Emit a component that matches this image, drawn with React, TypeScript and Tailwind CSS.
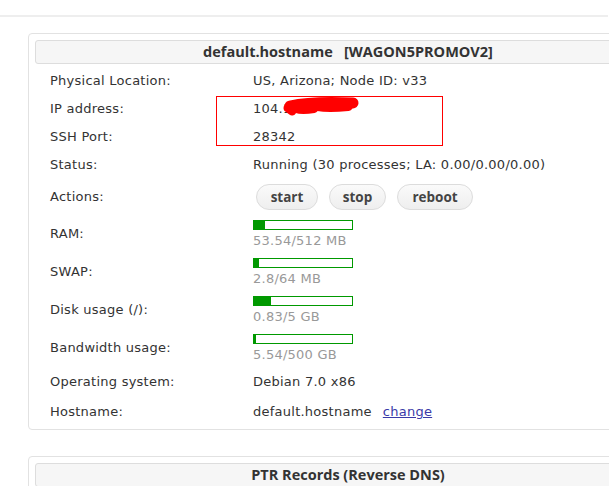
import React from "react";

const font = { fontFamily: '"DejaVu Sans", Verdana, sans-serif', letterSpacing: "0.25px" };
const headFont = { fontFamily: '"Open Sans", "Noto Sans", sans-serif', letterSpacing: "0px" };

function Bar({ pct, label }: { pct: number; label: string }) {
  return (
    <div className="flex flex-col pt-[5px]">
      <div className="w-[100px] h-[10px] border border-[#009900] bg-white">
        <div className="h-full bg-[#009900]" style={{ width: `${pct}%` }} />
      </div>
      <div className="text-[13px] leading-[16px] mt-[3px] text-[#999]">{label}</div>
    </div>
  );
}

function Row({ label, h, children, top }: { label: string; h: string; children: React.ReactNode; top?: boolean }) {
  return (
    <div className={`flex ${h} ${top ? "items-start" : "items-center"}`}>
      <div className={`w-[203px] shrink-0 ${top ? "self-center" : ""}`}>{label}</div>
      <div>{children}</div>
    </div>
  );
}

export default function App() {
  return (
    <div className="relative w-[609px] h-[486px] overflow-hidden bg-white text-[13px] text-[#333]" style={font}>
      <div className="h-[15px]" />
      <div className="h-[2px] w-[608px] bg-[#eeeeee]" />
      <div className="ml-[28px] mt-[16px] w-[640px] border border-[#e2e2e2] rounded-[4px] p-[6px] pb-[2px]">
        <div className="h-[24px] bg-[#f6f6f6] border border-[#dddddd] rounded-[3px] flex items-center justify-center font-bold text-[14.5px] text-[#333]" style={headFont}>
          default.hostname&nbsp;&nbsp;&nbsp;[WAGON5PROMOV2]
        </div>
        <div className="pl-[15px] pt-[3px]">
          <Row label="Physical Location:" h="h-[28px]">US, Arizona; Node ID: v33</Row>
          <Row label="IP address:" h="h-[28px]">104.1</Row>
          <Row label="SSH Port:" h="h-[28px]">28342</Row>
          <Row label="Status:" h="h-[28px]">Running (30 processes; LA: 0.00/0.00/0.00)</Row>
          <Row label="Actions:" h="h-[36px]">
            <div className="flex gap-[11px] pl-[3px]" style={headFont}>
              {[
                ["start", "w-[62px]"],
                ["stop", "w-[57px]"],
                ["reboot", "w-[76px]"],
              ].map(([t, w]) => (
                <div key={t} className={`${w} h-[26px] rounded-full border border-[#dcdcdc] bg-gradient-to-b from-[#fafafa] to-[#eeeeee] flex items-center justify-center font-bold text-[13.5px] text-[#444]`}>
                  {t}
                </div>
              ))}
            </div>
          </Row>
          <Row label="RAM:" h="h-[38px]" top>
            <Bar pct={11} label="53.54/512 MB" />
          </Row>
          <Row label="SWAP:" h="h-[38px]" top>
            <Bar pct={5} label="2.8/64 MB" />
          </Row>
          <Row label="Disk usage (/):" h="h-[38px]" top>
            <Bar pct={17} label="0.83/5 GB" />
          </Row>
          <Row label="Bandwidth usage:" h="h-[38px]" top>
            <Bar pct={2} label="5.54/500 GB" />
          </Row>
          <Row label="Operating system:" h="h-[30px]">Debian 7.0 x86</Row>
          <Row label="Hostname:" h="h-[30px]">
            <span>default.hostname</span>
            <a className="ml-[11px] text-[#3a3aa8] underline">change</a>
          </Row>
        </div>
      </div>
      <div className="ml-[28px] mt-[26px] w-[640px] border border-[#e2e2e2] rounded-[4px] p-[6px]">
        <div className="h-[24px] bg-[#f6f6f6] border border-[#dddddd] rounded-[3px] flex items-center justify-center font-bold text-[14.5px] text-[#333]" style={headFont}>
          PTR Records (Reverse DNS)
        </div>
      </div>
      <div className="absolute left-[216px] top-[96px] w-[227px] h-[50px] border border-[#ff0000]" />
      <svg className="absolute left-[278px] top-[94px]" width="90" height="26" viewBox="0 0 90 26">
        <g stroke="#ff0000" strokeLinecap="round" strokeLinejoin="round" fill="none">
          <path d="M12 12 C 30 8, 55 8, 75 9" strokeWidth="11" />
          <path d="M10 14 L 14 17" strokeWidth="9" />
          <path d="M18 15 C 24 17, 30 16, 36 15" strokeWidth="8" />
          <path d="M40 12 C 50 14, 60 13, 70 12" strokeWidth="10" />
        </g>
      </svg>
    </div>
  );
}
